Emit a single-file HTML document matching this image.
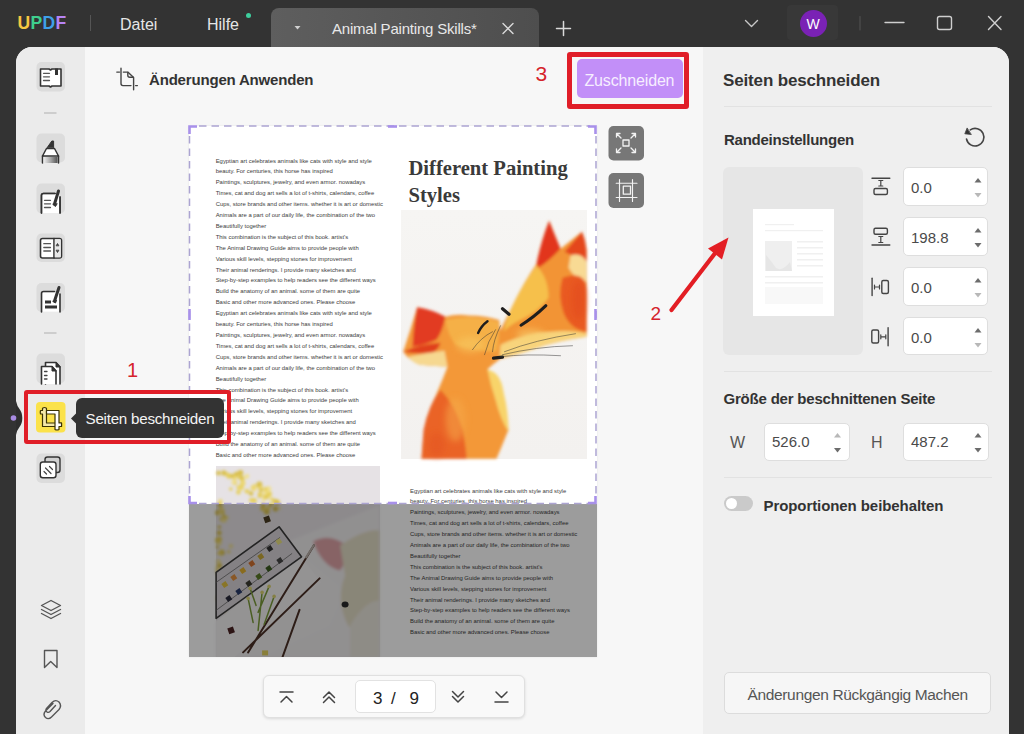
<!DOCTYPE html>
<html><head><meta charset="utf-8">
<style>
*{margin:0;padding:0;box-sizing:border-box}
html,body{width:1024px;height:734px;overflow:hidden;background:#333;font-family:"Liberation Sans",sans-serif;position:relative}
.a{position:absolute}
.t{position:absolute;white-space:nowrap;line-height:1}
svg{position:absolute;left:0;top:0;overflow:visible}
.inp{position:absolute;background:#fff;border:1px solid #dedede;border-radius:5px}
.num{position:absolute;font-size:15px;color:#4a4a4a;line-height:1;white-space:nowrap;margin-top:-1.5px}
.doc{position:absolute;font-size:5.9px;line-height:10.9px;color:#3c3c3c;white-space:nowrap}
</style></head><body>
<!-- ===== title bar ===== -->
<div class="t" style="left:17.5px;top:14.5px;font-size:17.5px;font-weight:bold;letter-spacing:0.3px"><span style="color:#f5c842">U</span><span style="color:#3ecf8e">P</span><span style="color:#3fa0e8">D</span><span style="color:#b784f5">F</span></div>
<div class="a" style="left:90px;top:15px;width:1px;height:16px;background:#555"></div>
<div class="t" style="left:120px;top:17px;font-size:16px;color:#e6e6e6">Datei</div>
<div class="t" style="left:207px;top:17px;font-size:16px;color:#e6e6e6">Hilfe</div>
<div class="a" style="left:246px;top:13px;width:5px;height:5px;border-radius:50%;background:#3ecf9e"></div>
<div class="a" style="left:271px;top:8px;width:268px;height:39px;border-radius:8px 8px 0 0;background:linear-gradient(90deg,#5e5e5e,#4e4e4e)"></div>
<div class="t" style="left:332px;top:21px;font-size:15px;letter-spacing:-0.2px;color:#e8e8e8">Animal Painting Skills*</div>
<div class="a" style="left:787px;top:5px;width:51px;height:35px;border-radius:4px;background:#383838"></div>
<div class="a" style="left:799.5px;top:9.5px;width:27px;height:27px;border-radius:50%;background:#7a22b5"></div>
<div class="t" style="left:799.5px;top:16.5px;width:27px;text-align:center;font-size:14px;color:#fff">W</div>

<!-- ===== main window ===== -->
<div class="a" style="left:16px;top:47px;width:993px;height:700px;border-radius:16px 16px 0 0;background:#f7f7f7;overflow:hidden">
  <div class="a" style="left:0;top:0;width:69px;height:700px;background:#ebebeb"></div>
  <div class="a" style="left:687px;top:0;width:306px;height:700px;background:#efefef"></div>
</div>

<!-- content header -->
<div class="t" style="left:149px;top:72px;font-size:15px;letter-spacing:-0.18px;font-weight:bold;color:#333">Änderungen Anwenden</div>

<!-- right panel -->
<div class="t" style="left:723px;top:72px;font-size:17px;letter-spacing:-0.15px;font-weight:bold;color:#333">Seiten beschneiden</div>
<div class="a" style="left:724px;top:106px;width:268px;height:1px;background:#e2e2e2"></div>
<div class="t" style="left:724px;top:131.5px;font-size:15px;letter-spacing:-0.25px;font-weight:bold;color:#333">Randeinstellungen</div>
<div class="a" style="left:723px;top:167px;width:140px;height:188px;border-radius:6px;background:#e6e6e6"></div>
<div class="a" style="left:752.5px;top:208.5px;width:81px;height:107.5px;background:#fff"></div>

<div class="inp" style="left:903.3px;top:167px;width:85.2px;height:38.5px"></div>
<div class="inp" style="left:903.3px;top:217px;width:85.2px;height:38.5px"></div>
<div class="inp" style="left:903.3px;top:267px;width:85.2px;height:38.5px"></div>
<div class="inp" style="left:903.3px;top:316.7px;width:85.2px;height:38.5px"></div>
<div class="num" style="left:911px;top:181px">0.0</div>
<div class="num" style="left:911px;top:231px">198.8</div>
<div class="num" style="left:911px;top:281px">0.0</div>
<div class="num" style="left:911px;top:331px">0.0</div>

<div class="a" style="left:724px;top:371px;width:268px;height:1px;background:#e2e2e2"></div>
<div class="t" style="left:723.5px;top:391px;font-size:15px;letter-spacing:-0.2px;font-weight:bold;color:#333">Größe der beschnittenen Seite</div>
<div class="t" style="left:730px;top:435px;font-size:16px;color:#555">W</div>
<div class="inp" style="left:763.5px;top:422.5px;width:86px;height:38px"></div>
<div class="num" style="left:772px;top:435px">526.0</div>
<div class="t" style="left:871px;top:435px;font-size:16px;color:#555">H</div>
<div class="inp" style="left:903px;top:422.5px;width:85.5px;height:38px"></div>
<div class="num" style="left:911px;top:435px">487.2</div>
<div class="a" style="left:724px;top:477px;width:268px;height:1px;background:#e2e2e2"></div>
<div class="a" style="left:723.5px;top:496px;width:29px;height:15px;border-radius:8px;background:#cacaca"></div>
<div class="a" style="left:725.5px;top:498px;width:11px;height:11px;border-radius:50%;background:#fff"></div>
<div class="t" style="left:763.5px;top:498px;font-size:15px;letter-spacing:-0.08px;font-weight:bold;color:#333">Proportionen beibehalten</div>
<div class="a" style="left:724px;top:672px;width:267px;height:41.5px;border-radius:5px;background:#f6f6f6;border:1px solid #dcdcdc"></div>
<div class="t" style="left:747.5px;top:686.5px;font-size:15.5px;letter-spacing:-0.35px;color:#555">Änderungen Rückgängig Machen</div>

<!-- zuschneiden -->
<div class="a" style="left:577px;top:58.5px;width:105.5px;height:39.5px;border-radius:5px;background:#c28ff8"></div>
<div class="t" style="left:584.5px;top:73px;font-size:16px;letter-spacing:-0.16px;color:#f6eeff">Zuschneiden</div>
<div class="a" style="left:566.8px;top:52px;width:122.4px;height:56.5px;border:5px solid #e01e28;border-radius:3px"></div>
<div class="t" style="left:535.5px;top:62.5px;font-size:21px;color:#d5232b">3</div>


<!-- ===== document page ===== -->
<div class="a" style="left:188.5px;top:125.5px;width:408.5px;height:531.5px;background:#fff;overflow:hidden;box-shadow:0 0 2px rgba(0,0,0,.08)">
 <div class="doc" style="left:27.2px;top:30px">Egyptian art celebrates animals like cats with style and style<br>beauty. For centuries, this horse has inspired<br>Paintings, sculptures, jewelry, and even armor. nowadays<br>Times, cat and dog art sells a lot of t-shirts, calendars, coffee<br>Cups, store brands and other items. whether it is art or domestic<br>Animals are a part of our daily life, the combination of the two<br>Beautifully together<br>This combination is the subject of this book. artist's<br>The Animal Drawing Guide aims to provide people with<br>Various skill levels, stepping stones for improvement<br>Their animal renderings. I provide many sketches and<br>Step-by-step examples to help readers see the different ways<br>Build the anatomy of an animal. some of them are quite<br>Basic and other more advanced ones. Please choose<br>Egyptian art celebrates animals like cats with style and style<br>beauty. For centuries, this horse has inspired<br>Paintings, sculptures, jewelry, and even armor. nowadays<br>Times, cat and dog art sells a lot of t-shirts, calendars, coffee<br>Cups, store brands and other items. whether it is art or domestic<br>Animals are a part of our daily life, the combination of the two<br>Beautifully together<br>This combination is the subject of this book. artist's<br>The Animal Drawing Guide aims to provide people with<br>Various skill levels, stepping stones for improvement<br>Their animal renderings. I provide many sketches and<br>Step-by-step examples to help readers see the different ways<br>Build the anatomy of an animal. some of them are quite<br>Basic and other more advanced ones. Please choose</div>
 <div class="t" style="left:220px;top:29.5px;font-family:'Liberation Serif',serif;font-weight:bold;font-size:20.6px;line-height:26.6px;color:#3a3a3a">Different Painting<br>Styles</div>
 <svg style="left:212px;top:84.8px" width="186" height="249" viewBox="400.5 210.3 186 249">
  <defs>
   <filter id="bl" x="-20%" y="-20%" width="140%" height="140%"><feGaussianBlur stdDeviation="1.5"/></filter>
   <filter id="bl2" x="-20%" y="-20%" width="140%" height="140%"><feGaussianBlur stdDeviation="3"/></filter>
   <linearGradient id="fbg" x1="0" y1="0" x2="0" y2="1"><stop offset="0" stop-color="#f6f5f3"/><stop offset="1" stop-color="#f3f1ef"/></linearGradient>
  </defs>
  <rect x="400.5" y="210.3" width="186" height="249" fill="url(#fbg)"/>
  <g filter="url(#bl)">
   <!-- big fox head -->
   <path d="M548.6,221 Q553,232 560,249 L581.5,232 Q585,240 586,250 L586,337 Q560,340 534,349 Q515,356 496,360 Q493,345 497,336 Q506,318 515,300 Q525,280 536,264 Q541,240 548.6,221 Z" fill="#f29434"/>
   <path d="M548.6,221 Q553,232 560,249 Q548,262 538,268 L536,264 Q541,240 548.6,221 Z" fill="#e2361c"/>
   <path d="M581.5,232 Q585,240 586,250 L586,262 Q575,258 564,252 Z" fill="#e4461e"/>
   <path d="M570,256 Q580,252 586,262 L586,282 Q575,280 568,268 Z" fill="#f8da94"/>
   <path d="M562,278 Q586,270 586,292 L586,332 Q570,330 563,313 Q557,296 562,278 Z" fill="#e95a20"/>
   <path d="M536,266 Q548,278 548,298 Q538,312 520,320 Q508,326 503,332 Q506,318 515,300 Q525,280 536,266 Z" fill="#f6c04c"/>
   <path d="M500,345 Q525,333 550,332 Q572,330 586,334 L586,337 Q560,340 534,349 Q515,356 498,358 Z" fill="#f8d47c"/>
   <!-- small cat -->
   <path d="M416.7,307.6 Q430,310 444.8,317 Q456,314 468,315.8 Q486,316 498.7,320.4 Q501,340 498.7,360 Q493,364 487,369.6 Q496,380 501,393 Q506,410 508,430 Q502,445 496,459 L421,459 Q422,445 423.8,430.5 Q428,410 435.5,395.4 Q442,380 447,367 Q430,366 419,365 Q408,360 402.7,352 Q410,330 416.7,307.6 Z" fill="#f39838"/>
   <path d="M416.7,307.6 Q432,310 444.8,317 Q442,332 436,340 Q425,345 412,347 Q413,325 416.7,307.6 Z" fill="#e23a20"/>
   <path d="M402.7,352 Q420,344 440,343 Q438,350 432,353 Q418,355 402.7,352 Z" fill="#e0401e"/>
   <path d="M408,357 Q425,353 444,351 L447,367 Q430,366 419,365 Q411,362 408,357 Z" fill="#f6d890"/>
   <path d="M445,320 Q470,314 498,322 Q499,340 496,352 Q475,352 455,345 Q447,335 445,320 Z" fill="#f5b046"/>
   <path d="M423,430 Q428,405 440,390 Q455,405 462,430 Q466,450 466,459 L421,459 Z" fill="#ea6428"/>
   <path d="M487,370 Q500,372 503,392 Q508,412 508,432 Q500,420 495,400 Q490,385 487,370 Z" fill="#f8d46a"/>
  </g>
  <g filter="url(#bl2)" opacity="0.55">
   <ellipse cx="470" cy="345" rx="14" ry="8" fill="#f8c860"/>
   <ellipse cx="455" cy="420" rx="10" ry="22" fill="#f6a848"/>
   <ellipse cx="436" cy="445" rx="8" ry="12" fill="#e45424"/>
   <ellipse cx="578" cy="300" rx="7" ry="20" fill="#e24a1e"/>
   <ellipse cx="530" cy="335" rx="14" ry="6" fill="#f8d070"/>
  </g>
  <g fill="none" stroke="#1e1e1e" stroke-linecap="round">
   <path d="M520.5,325.5 Q533,318 545.4,306" stroke-width="3"/>
   <path d="M477.6,333.3 Q481,326 487,321.6" stroke-width="2.4"/>
   <path d="M502,309 L508.5,314.5" stroke-width="3.2"/>
   <path d="M493,358.5 L502,357.5" stroke-width="3.2"/>
   <path d="M504,352 Q535,340 575,334 M502,355 Q535,347 572,346 M500,357 Q525,354 560,356" stroke-width="0.5" stroke="#333"/>
   <path d="M495,330 Q487,342 484,355 M492,332 Q480,338 472,350 M500,326 Q493,340 492,352" stroke-width="0.5" stroke="#333"/>
  </g>
 </svg>
 <div class="doc" style="left:221.5px;top:360px">Egyptian art celebrates animals like cats with style and style<br>beauty. For centuries, this horse has inspired<br>Paintings, sculptures, jewelry, and even armor. nowadays<br>Times, cat and dog art sells a lot of t-shirts, calendars, coffee<br>Cups, store brands and other items. whether it is art or domestic<br>Animals are a part of our daily life, the combination of the two<br>Beautifully together<br>This combination is the subject of this book. artist's<br>The Animal Drawing Guide aims to provide people with<br>Various skill levels, stepping stones for improvement<br>Their animal renderings. I provide many sketches and<br>Step-by-step examples to help readers see the different ways<br>Build the anatomy of an animal. some of them are quite<br>Basic and other more advanced ones. Please choose</div>
 <svg style="left:27.4px;top:340px" width="164" height="192" viewBox="215.9 465.6 164 192">
  <defs>
   <filter id="bl3" x="-20%" y="-20%" width="140%" height="140%"><feGaussianBlur stdDeviation="1.4"/></filter>
   <filter id="bl4" x="-20%" y="-20%" width="140%" height="140%"><feGaussianBlur stdDeviation="0.6"/></filter>
  </defs>
  <rect x="215.9" y="465.6" width="164" height="192" fill="#e6e2e5"/>
  <g filter="url(#bl3)">
   <path d="M290,540 L379,505 L379,657 L262,657 Z" fill="#eeebec"/>
   <g><circle cx="227.7" cy="474.5" r="2.4" fill="#e6cf5a"/><circle cx="259.1" cy="486.4" r="2.4" fill="#ecd770"/><circle cx="268.4" cy="507.0" r="2.3" fill="#ecd770"/><circle cx="238.5" cy="487.0" r="2.1" fill="#e6cf5a"/><circle cx="266.0" cy="496.5" r="2.4" fill="#d9bf48"/><circle cx="266.6" cy="492.4" r="2.4" fill="#f0e090"/><circle cx="265.3" cy="491.3" r="2.7" fill="#f0e090"/><circle cx="279.0" cy="507.9" r="1.7" fill="#f0e090"/><circle cx="236.2" cy="473.9" r="2.5" fill="#d9bf48"/><circle cx="246.5" cy="476.2" r="2.3" fill="#f0e090"/><circle cx="259.3" cy="484.1" r="2.9" fill="#d9bf48"/><circle cx="276.0" cy="501.5" r="2.8" fill="#e6cf5a"/><circle cx="263.1" cy="505.1" r="2.4" fill="#d9bf48"/><circle cx="218.4" cy="472.7" r="2.3" fill="#d9bf48"/><circle cx="263.6" cy="499.3" r="2.0" fill="#f0e090"/><circle cx="277.0" cy="502.4" r="1.7" fill="#d9bf48"/><circle cx="254.6" cy="485.6" r="1.9" fill="#e6cf5a"/><circle cx="242.6" cy="482.5" r="1.6" fill="#ecd770"/><circle cx="275.3" cy="508.4" r="2.6" fill="#d9bf48"/><circle cx="247.1" cy="475.6" r="2.1" fill="#f0e090"/><circle cx="262.6" cy="508.0" r="2.6" fill="#e6cf5a"/><circle cx="260.7" cy="488.0" r="2.2" fill="#ecd770"/><circle cx="270.6" cy="504.4" r="2.0" fill="#d9bf48"/><circle cx="254.1" cy="500.3" r="2.6" fill="#e6cf5a"/><circle cx="254.4" cy="489.0" r="2.1" fill="#f0e090"/><circle cx="233.4" cy="476.1" r="1.9" fill="#d9bf48"/><circle cx="267.9" cy="509.6" r="1.7" fill="#e6cf5a"/><circle cx="275.2" cy="501.0" r="2.3" fill="#d9bf48"/><circle cx="234.4" cy="482.0" r="2.6" fill="#e6cf5a"/><circle cx="261.2" cy="487.0" r="1.9" fill="#ecd770"/><circle cx="251.0" cy="499.1" r="1.6" fill="#ecd770"/><circle cx="240.3" cy="472.3" r="2.8" fill="#d9bf48"/><circle cx="260.7" cy="489.2" r="2.1" fill="#ecd770"/><circle cx="233.6" cy="481.7" r="2.3" fill="#f0e090"/><circle cx="234.2" cy="477.4" r="2.2" fill="#ecd770"/><circle cx="266.0" cy="510.4" r="2.9" fill="#ecd770"/><circle cx="269.0" cy="493.7" r="2.8" fill="#e6cf5a"/><circle cx="272.0" cy="499.1" r="1.9" fill="#e6cf5a"/><circle cx="268.3" cy="488.6" r="2.9" fill="#f0e090"/><circle cx="260.9" cy="489.7" r="1.8" fill="#d9bf48"/><circle cx="238.5" cy="477.0" r="1.7" fill="#e6cf5a"/><circle cx="238.3" cy="491.9" r="2.3" fill="#e6cf5a"/><circle cx="241.1" cy="487.4" r="2.7" fill="#ecd770"/><circle cx="230.8" cy="488.6" r="1.8" fill="#e6cf5a"/><circle cx="242.7" cy="482.9" r="2.7" fill="#ecd770"/><circle cx="228.9" cy="476.1" r="2.3" fill="#e6cf5a"/><circle cx="269.7" cy="497.7" r="1.7" fill="#f0e090"/><circle cx="277.8" cy="502.0" r="2.3" fill="#d9bf48"/><circle cx="231.9" cy="475.5" r="2.1" fill="#d9bf48"/><circle cx="241.3" cy="485.7" r="1.8" fill="#e6cf5a"/><circle cx="259.5" cy="495.9" r="1.8" fill="#d9bf48"/><circle cx="242.0" cy="478.4" r="2.5" fill="#e6cf5a"/><circle cx="251.0" cy="493.1" r="2.3" fill="#d9bf48"/><circle cx="241.3" cy="476.7" r="1.9" fill="#d9bf48"/><circle cx="264.4" cy="496.2" r="2.2" fill="#e6cf5a"/><circle cx="266.7" cy="511.7" r="2.7" fill="#d9bf48"/><circle cx="265.5" cy="488.8" r="2.1" fill="#e6cf5a"/><circle cx="259.9" cy="493.8" r="2.4" fill="#e6cf5a"/><circle cx="246.8" cy="490.9" r="2.3" fill="#e6cf5a"/><circle cx="251.0" cy="499.9" r="2.1" fill="#e6cf5a"/><circle cx="223.8" cy="472.5" r="2.6" fill="#d9bf48"/><circle cx="253.2" cy="487.4" r="2.7" fill="#ecd770"/><circle cx="220.5" cy="506.7" r="2.6" fill="#ecd770"/><circle cx="223.9" cy="609.8" r="2.3" fill="#f0e090"/><circle cx="217.1" cy="567.8" r="2.0" fill="#f0e090"/><circle cx="223.0" cy="603.3" r="2.2" fill="#e6cf5a"/><circle cx="218.3" cy="541.3" r="2.6" fill="#ecd770"/><circle cx="230.8" cy="545.7" r="2.2" fill="#f0e090"/><circle cx="227.2" cy="517.2" r="1.7" fill="#f0e090"/><circle cx="224.3" cy="582.3" r="2.7" fill="#f0e090"/><circle cx="219.0" cy="564.5" r="2.5" fill="#ecd770"/><circle cx="219.5" cy="564.4" r="1.9" fill="#ecd770"/><circle cx="227.1" cy="593.7" r="2.4" fill="#f0e090"/><circle cx="219.5" cy="565.5" r="2.3" fill="#d9bf48"/><circle cx="218.7" cy="597.8" r="2.5" fill="#ecd770"/><circle cx="221.4" cy="518.9" r="2.0" fill="#d9bf48"/><circle cx="221.1" cy="553.1" r="2.4" fill="#ecd770"/><circle cx="221.7" cy="551.5" r="2.6" fill="#e6cf5a"/><circle cx="219.2" cy="552.9" r="2.0" fill="#e6cf5a"/><circle cx="228.6" cy="551.4" r="1.8" fill="#ecd770"/><circle cx="217.4" cy="571.3" r="1.8" fill="#d9bf48"/><circle cx="219.2" cy="526.6" r="1.7" fill="#d9bf48"/><circle cx="223.5" cy="515.1" r="1.5" fill="#d9bf48"/><circle cx="223.2" cy="518.7" r="1.6" fill="#ecd770"/><circle cx="217.3" cy="546.6" r="1.6" fill="#d9bf48"/><circle cx="219.5" cy="504.0" r="2.1" fill="#d9bf48"/><circle cx="220.3" cy="500.8" r="2.1" fill="#ecd770"/><circle cx="222.5" cy="570.9" r="2.5" fill="#f0e090"/><circle cx="219.9" cy="543.0" r="1.9" fill="#f0e090"/><circle cx="217.8" cy="512.4" r="2.7" fill="#d9bf48"/><circle cx="222.4" cy="510.7" r="2.5" fill="#f0e090"/><circle cx="219.1" cy="532.5" r="2.4" fill="#d9bf48"/><circle cx="222.1" cy="511.8" r="2.2" fill="#e6cf5a"/><circle cx="218.9" cy="573.4" r="2.2" fill="#e6cf5a"/><circle cx="220.4" cy="579.0" r="1.7" fill="#ecd770"/><circle cx="224.0" cy="519.7" r="2.7" fill="#f0e090"/><circle cx="220.0" cy="513.5" r="1.9" fill="#f0e090"/><circle cx="218.4" cy="561.0" r="2.3" fill="#f0e090"/><circle cx="218.9" cy="553.1" r="1.6" fill="#ecd770"/><circle cx="226.2" cy="583.0" r="2.2" fill="#f0e090"/><circle cx="217.6" cy="539.5" r="2.6" fill="#e6cf5a"/><circle cx="222.9" cy="552.7" r="1.9" fill="#d9bf48"/><circle cx="223.2" cy="596.3" r="2.6" fill="#e6cf5a"/><circle cx="219.2" cy="538.8" r="2.6" fill="#e6cf5a"/><circle cx="224.7" cy="516.7" r="2.2" fill="#e6cf5a"/><circle cx="221.9" cy="520.3" r="1.7" fill="#f0e090"/><circle cx="230.3" cy="573.7" r="1.7" fill="#ecd770"/></g>
   <path d="M216,621 L300.9,553.7 L345,590 L330,625 L262,657 L216,657 Z" fill="#efedee"/>
   <path d="M313,541 Q330,532 346,545 Q348,560 340,570 Q322,566 313,541 Z" fill="#dda2a6"/>
   <path d="M340,545 Q365,528 379,530 L379,628 Q360,640 348,625 Q335,600 345,575 Z" fill="#e1dbc4"/>
   <path d="M350,625 Q365,600 379,600 L379,657 L350,657 Z" fill="#e8e5dc"/>
  </g>
  <path d="M216,621 L300.9,556 L321,582 L234,657 L216,657 Z" fill="#f2f0f1"/>
  <path d="M216,572 L279,526.4 L301.4,556.4 L216,618 Z" fill="#d8d3d8" stroke="#3a3a3a" stroke-width="1.6" stroke-linejoin="round"/>
  <path d="M216,582 L280,537 M216,610 L292,553" stroke="#6a6a6a" stroke-width="0.8"/>
  <g filter="url(#bl4)">
   <rect x="222" y="582" width="5" height="5" fill="#e0c040" transform="rotate(-35 224 584)"/>
   <rect x="231" y="575" width="5" height="5" fill="#e09040" transform="rotate(-35 233 577)"/>
   <rect x="240" y="568" width="5" height="5" fill="#e0b030" transform="rotate(-35 242 570)"/>
   <rect x="249" y="561" width="5" height="5" fill="#d07030" transform="rotate(-35 251 563)"/>
   <rect x="258" y="554" width="5" height="5" fill="#c8a838" transform="rotate(-35 260 556)"/>
   <rect x="267" y="546" width="5" height="5" fill="#333" transform="rotate(-35 269 548)"/>
   <rect x="276" y="539" width="5" height="5" fill="#e8e080" transform="rotate(-35 278 541)"/>
   <rect x="226" y="596" width="5" height="5" fill="#2a2a3a" transform="rotate(-35 228 598)"/>
   <rect x="236" y="589" width="5" height="5" fill="#2a3a6a" transform="rotate(-35 238 591)"/>
   <rect x="246" y="581" width="5" height="5" fill="#3a3a30" transform="rotate(-35 248 583)"/>
   <rect x="256" y="574" width="5" height="5" fill="#5a7a28" transform="rotate(-35 258 576)"/>
   <rect x="266" y="566" width="5" height="5" fill="#3a5a20" transform="rotate(-35 268 568)"/>
   <rect x="277" y="558" width="5" height="5" fill="#444" transform="rotate(-35 279 560)"/>
   <rect x="264" y="516" width="6" height="6" fill="#4a3a22" transform="rotate(-20 267 519)"/>
   <rect x="228" y="627" width="6" height="6" fill="#4a2424" transform="rotate(-20 231 630)"/>
   <rect x="262" y="650" width="6" height="5" fill="#e0d060"/>
  </g>
  <path d="M313.7,545 L248,652 M319.5,578 L243,652 M299.4,609.5 L282.3,657" stroke="#4a3026" stroke-width="2" stroke-linecap="round"/>
  <path d="M306,557 L313.7,545" stroke="#b8b0a8" stroke-width="2" stroke-linecap="round"/>
  <g stroke="#7a9a3a" stroke-width="1.5" stroke-linecap="round"><path d="M258,630 L262,592 M253,622 L248,598 M264,624 L274,596 M258,612 L269,586 M256,605 L250,588"/></g>
  <g fill="#d8d070"><circle cx="262" cy="592" r="1.8"/><circle cx="248" cy="598" r="1.8"/><circle cx="274" cy="596" r="1.8"/><circle cx="269" cy="586" r="1.8"/><circle cx="250" cy="588" r="1.8"/></g>
  <ellipse cx="345" cy="604" rx="3.5" ry="3" fill="#2a2a2a"/>
 </svg>
 <div class="a" style="left:0;top:378.5px;width:408.5px;height:153px;background:rgba(0,0,0,.39)"></div>
</div>
<!-- crop marquee -->
<svg width="1024" height="734" style="pointer-events:none">
 <g fill="none" stroke="#aca4d2" stroke-width="1.5" stroke-dasharray="7.5 5">
  <path d="M199,126 H590"/>
  <path d="M199,503.5 H590"/>
  <path d="M189.5,136 V498"/>
  <path d="M596,136 V498"/>
 </g>
 <g fill="none" stroke="#a890ea" stroke-width="2.6">
  <path d="M189.5,134 V126.5 H197"/>
  <path d="M588,126.5 H595.5 V134"/>
  <path d="M189.5,496 V503 H197"/>
  <path d="M588,503 H595.5 V496"/>
  <path d="M388,126.5 H397"/>
  <path d="M388,503 H397"/>
  <path d="M189.5,309 V320"/>
  <path d="M595.5,309 V320"/>
 </g>
</svg>

<!-- page nav -->
<div class="a" style="left:263px;top:674.5px;width:261.5px;height:43px;border-radius:6px;background:#f9f9f9;border:1px solid #e0e0e0;box-shadow:0 1px 3px rgba(0,0,0,.12)"></div>
<div class="a" style="left:355px;top:679.5px;width:80.5px;height:33.5px;border-radius:5px;background:#fff;border:1px solid #e2e2e2"></div>
<div class="t" style="left:373px;top:690px;font-size:17px;color:#222">3</div>
<div class="t" style="left:391px;top:690px;font-size:17px;color:#222">/</div>
<div class="t" style="left:409.5px;top:690px;font-size:17px;color:#222">9</div>

<!-- tooltip -->
<div class="a" style="left:76px;top:398px;width:148px;height:39.5px;border-radius:6px;background:#333"></div>
<div class="t" style="left:85.5px;top:411px;font-size:15.2px;letter-spacing:-0.25px;color:#f4f4f4">Seiten beschneiden</div>
<div class="a" style="left:24.3px;top:389.6px;width:206.6px;height:54px;border:4.6px solid #e01e28;border-radius:3px"></div>
<div class="t" style="left:127px;top:359.5px;font-size:20px;color:#d5232b">1</div>
<div class="t" style="left:650.5px;top:303.5px;font-size:19px;color:#d5232b">2</div>

<svg width="1024" height="734" viewBox="0 0 1024 734" style="pointer-events:none">
<g fill="none" stroke-linecap="round" stroke-linejoin="round">
 <!-- title bar icons -->
 <path d="M294.5,26 L300.5,26 L297.5,29.5 Z" fill="#d0d0d0" stroke="none"/>
 <path d="M503,23.5 L513,33.5 M513,23.5 L503,33.5" stroke="#dadada" stroke-width="1.4"/>
 <path d="M556.5,28.5 H570.5 M563.5,21.5 V35.5" stroke="#dadada" stroke-width="1.5"/>
 <path d="M745.5,20.5 L751.5,26.5 L757.5,20.5" stroke="#c8c8c8" stroke-width="1.4"/>
 <path d="M860,16.5 V30" stroke="#555" stroke-width="1"/>
 <path d="M885,22.5 H904" stroke="#cfcfcf" stroke-width="1.4"/>
 <rect x="937.5" y="16.5" width="14" height="13" rx="2" stroke="#cfcfcf" stroke-width="1.4"/>
 <path d="M988.5,16.5 L1001,29.5 M1001,16.5 L988.5,29.5" stroke="#cfcfcf" stroke-width="1.4"/>
</g>
<!-- sidebar icon backgrounds -->
<g fill="#dcdcdc">
 <rect x="36.5" y="62" width="28.5" height="29.5" rx="5"/>
 <rect x="36.5" y="133.5" width="28.5" height="29" rx="5"/>
 <rect x="36.5" y="183.5" width="28.5" height="30" rx="5"/>
 <rect x="36.5" y="233.5" width="28.5" height="28.5" rx="5"/>
 <rect x="36.5" y="283" width="28.5" height="29" rx="5"/>
 <rect x="36.5" y="353.5" width="28.5" height="30" rx="5"/>
 <rect x="36.5" y="453.5" width="28.5" height="29.5" rx="5"/>
</g>
<rect x="36" y="402" width="29.5" height="30.5" rx="4" fill="#fbe24a"/>
<path d="M44,113 H56.5" stroke="#bdbdbd" stroke-width="1.3"/>
<path d="M44,333 H56.5" stroke="#bdbdbd" stroke-width="1.3"/>
<g stroke="#333" stroke-width="1.6" stroke-linejoin="round" stroke-linecap="round">
 <!-- book -->
 <path d="M40.5,69 H49 L50.5,70 L52,69 H61 V86 H52 L50.5,87 L49,86 H40.5 Z" fill="#fff"/>
 <path d="M43.5,73.3 H49.5 M43.5,76.8 H49.5 M43.5,80.5 H49.5" stroke="#555" stroke-width="1.3"/>
 <rect x="55" y="68.5" width="3" height="6.5" fill="#333" stroke="none"/>
 <!-- marker -->
 <path d="M47.3,147.5 L51.8,141 L53.6,141 L53.6,147.5 Z" fill="#333" stroke-width="1"/>
 <path d="M46.5,148.5 H54.5 L58.5,156 H42.5 Z" fill="#fff" stroke-width="1.5"/>
 <path d="M42.5,156 V163 M58.5,156 V163" stroke-width="1.5"/>
 <defs><linearGradient id="mk" x1="0" x2="1"><stop offset="0" stop-color="#f0f0f0"/><stop offset="0.5" stop-color="#a8a8a8"/><stop offset="1" stop-color="#555"/></linearGradient></defs><rect x="43.5" y="157" width="14" height="6" fill="url(#mk)" stroke="none"/>
 <!-- doc + pen -->
 <path d="M41.5,213 V195.5 Q41.5,193.5 43.5,193.5 H55 M60,197 V213" fill="none"/>
 <rect x="42.3" y="194.3" width="17" height="19" fill="#fff" stroke="none"/>
 <path d="M41.5,213 V195.5 Q41.5,193.5 43.5,193.5 H55 M60,197 V213" fill="none"/>
 <path d="M44.5,200.3 H50.5 M44.5,203.8 H50.5 M44.5,207.5 H50.5" stroke="#555" stroke-width="1.3"/>
 <path d="M58.5,191 L54.5,204" stroke-width="3"/>
 <path d="M53,204.5 L55.5,206.5 L57,204 Z" fill="#333" stroke-width="1"/>
 <!-- form doc -->
 <rect x="40.5" y="238.5" width="21" height="19.5" rx="2" fill="#fff"/>
 <path d="M54,238.5 V258" />
 <rect x="54.8" y="239.3" width="6" height="18" fill="#e8e8e8" stroke="none"/>
 <path d="M43.8,243.7 H50.5 M43.8,247.5 H50.5 M43.8,251 H50.5" stroke="#555" stroke-width="1.3"/>
 <path d="M56.3,245.5 L57.5,243.5 L58.7,245.5 Z M56.3,250.5 L57.5,252.5 L58.7,250.5 Z" fill="#444" stroke-width="0.8"/>
 <!-- redact doc -->
 <rect x="42.3" y="292.3" width="17" height="19.5" fill="#fff" stroke="none"/>
 <path d="M41.5,312 V293.5 Q41.5,291.5 43.5,291.5 H54.5 M60,294 V312" fill="none"/>
 <path d="M59,287.5 L54.5,301" stroke-width="3"/>
 <path d="M53,301.5 L55.5,303 L56.5,300.5 Z" fill="#333" stroke-width="1"/>
 <rect x="45" y="300.5" width="6" height="3" fill="#333" stroke="none"/>
 <rect x="45" y="305.5" width="12" height="3" fill="#333" stroke="none"/>
 <!-- pages -->
 <path d="M45.5,384 V362.5 H56 L60,367 V384" fill="#fff"/>
 <path d="M56,362.5 V367 H60 Z" fill="#333" stroke-width="1"/>
 <path d="M41.5,384 V366.5 H52 L56,371 V384" fill="#fff"/>
 <path d="M52,366.5 V371 H56 Z" fill="#333" stroke-width="1"/>
 <path d="M44.5,371.5 H47 M44.5,375.5 H47 M44.5,379 H47" stroke="#444" stroke-width="1.3"/>
 <!-- overlap squares -->
 <rect x="45" y="457" width="15" height="15.5" rx="2.5" fill="#d0d0d0" stroke-width="1.4"/>
 <rect x="40.3" y="462" width="15.7" height="15.7" rx="2.5" fill="#fff" stroke-width="1.4"/>
 <path d="M45.5,468 L51,473.5 M49.5,466.5 L52.5,469.5 M44,471.5 L46.5,474" stroke="#444" stroke-width="1.2"/>
</g>
<!-- yellow crop -->
<g stroke="#3a3204" stroke-width="1.2" stroke-linejoin="round">
 <path d="M42.5,408.5 Q42.5,407.5 44.5,407.5 Q46.5,407.5 46.5,408.5 V423 H61.5 V426.5 H42.5 V414 H40.5 Q40,412.3 40.5,410.5 H42.5 Z" fill="#f3e7a8"/>
 <path d="M46.5,410.5 H59 V423 H61.5 V426.5 H59 V429.5 Q57,430.5 55,429.5 V414 H46.5 Z" fill="#fff"/>
</g>
<!-- bottom sidebar icons -->
<g fill="none" stroke="#555" stroke-width="1.4" stroke-linejoin="round" stroke-linecap="round">
 <path d="M41.5,605.5 L51,600.5 L60.5,605.5 L51,610.5 Z"/>
 <path d="M41.5,609.5 L51,614.5 L60.5,609.5 M41.5,613.5 L51,618.5 L60.5,613.5"/>
 <path d="M44.5,650.5 H57 V667.5 L50.7,661.5 L44.5,667.5 Z"/>
 <path d="M53,703.5 L45.5,711 Q42.5,714.5 45.5,717.5 Q48.5,720 51.5,717 L59,709.5 Q62,705.5 59,702 Q55.5,699 52,702.5 L46.5,708.5 Q45,710.5 47,712 Q48.5,713 50,711.5 L55.5,705.5"/>
</g>
<!-- left edge indicator -->
<path d="M16,401 Q17,406 19.5,409 Q22.3,412.5 22.3,418 Q22.3,423.5 19.5,427 Q17,430 16,435 Z" fill="#2e2e2e"/>
<circle cx="13.5" cy="418" r="2.8" fill="#a88be2"/>
<!-- tooltip arrow -->
<path d="M76.5,413 L71,418.5 L76.5,424 Z" fill="#333"/>
<!-- header crop icon -->
<g fill="none" stroke="#444" stroke-width="1.4" stroke-linejoin="round" stroke-linecap="round">
 <path d="M121,68.2 V83.6 Q121,85.6 123,85.6 H131"/>
 <path d="M116.8,72.1 H119.5 M135.6,85.6 H137.4"/>
 <path d="M123.3,72.1 H127.8 L133.6,77.6 V89.8"/>
 <path d="M127.8,72.4 V75.3 Q127.8,77.2 129.8,77.2 H133.2"/>
</g>
<!-- right panel icons -->
<g fill="none" stroke="#444" stroke-width="1.4" stroke-linejoin="round" stroke-linecap="round">
 <path d="M966.5,139 A8.8,8.8 0 1 0 970.3,129.8" stroke-width="1.6"/>
 <path d="M967,128.3 L964.8,133.8 L971,134.5 Z" fill="#333" stroke-width="0.8"/>
 <!-- top margin -->
 <path d="M872,178.3 H889.8"/>
 <path d="M880.8,180.5 V186 M878.8,180.5 H882.8 M878.8,186 H882.8" stroke-width="1.2"/>
 <rect x="874" y="188.5" width="13.4" height="6" rx="1.5"/>
 <!-- bottom margin -->
 <rect x="874" y="228.3" width="13.4" height="6" rx="1.5"/>
 <path d="M880.8,236.5 V242.5 M878.8,236.5 H882.8 M878.8,242.5 H882.8" stroke-width="1.2"/>
 <path d="M872,245 H889.8"/>
 <!-- left margin -->
 <path d="M872.1,278.3 V295.6"/>
 <path d="M874.5,287 H879.5 M874.5,285 V289 M879.5,285 V289" stroke-width="1.2"/>
 <rect x="881.8" y="280.5" width="6.6" height="13" rx="1.5"/>
 <!-- right margin -->
 <rect x="871.8" y="330" width="6.8" height="13" rx="1.5"/>
 <path d="M880.8,336.8 H885.8 M880.8,334.8 V338.8 M885.8,334.8 V338.8" stroke-width="1.2"/>
 <path d="M888.1,327.8 V345.8"/>
</g>
<g fill="#6c6c6c" stroke="none">
 <path d="M974.5,182.5 L978,178 L981.5,182.5 Z"/><path d="M974.5,193 L978,197.5 L981.5,193 Z" fill="#b8b8b8"/>
 <path d="M974.5,232.5 L978,228 L981.5,232.5 Z"/><path d="M974.5,243 L978,247.5 L981.5,243 Z"/>
 <path d="M974.5,282.5 L978,278 L981.5,282.5 Z"/><path d="M974.5,293 L978,297.5 L981.5,293 Z" fill="#b8b8b8"/>
 <path d="M974.5,332.5 L978,328 L981.5,332.5 Z"/><path d="M974.5,343 L978,347.5 L981.5,343 Z" fill="#b8b8b8"/>
 <path d="M834,437.5 L837.5,433 L841,437.5 Z" fill="#b8b8b8"/><path d="M834,448 L837.5,452.5 L841,448 Z"/>
 <path d="M974.5,437.5 L978,433 L981.5,437.5 Z"/><path d="M974.5,448 L978,452.5 L981.5,448 Z"/>
</g>
<!-- preview mini page lines -->
<g fill="#f0f0f0" stroke="none">
 <rect x="765" y="224" width="29" height="1.2"/>
 <rect x="765" y="230" width="58" height="1.2"/>
 <rect x="765" y="241" width="27" height="30" fill="#efefef"/>
 <path d="M766,271 L766,255 Q772,262 776,268 Q782,272 790,262 L792,271 Z" fill="#e6e6e6"/>
 <rect x="797" y="241" width="26" height="1.5"/>
 <rect x="797" y="247" width="26" height="1.5"/>
 <rect x="797" y="253" width="26" height="1.5"/>
 <rect x="797" y="259" width="26" height="1.5"/>
 <rect x="797" y="265" width="26" height="1.5"/>
 <rect x="765" y="276" width="58" height="1.5"/>
 <rect x="765" y="282" width="58" height="1.5"/>
 <rect x="765" y="287" width="58" height="17" fill="#f8f8f8"/>
</g>
<!-- floating doc buttons -->
<rect x="608.5" y="126" width="35.5" height="34.5" rx="5" fill="#777"/>
<rect x="608.5" y="173" width="35.5" height="35" rx="5" fill="#777"/>
<g fill="none" stroke="#f2f2f2" stroke-width="1.3" stroke-linecap="round" stroke-linejoin="round">
 <rect x="623" y="140" width="6" height="6"/>
 <path d="M621,138 L616.5,133.5 M616.5,137 V133.5 H620 M631,138 L635.5,133.5 M632,133.5 H635.5 V137 M621,148 L616.5,152.5 M616.5,149 V152.5 H620 M631,148 L635.5,152.5 M632,152.5 H635.5 V149"/>
 <rect x="623.3" y="186.2" width="7.2" height="8"/>
 <path d="M619.5,179.5 V201.5 M632.5,179.5 V201.5 M616.2,183.2 H637 M616.2,197.5 H637" stroke-width="1.15"/>
</g>
<!-- nav icons -->
<g fill="none" stroke="#444" stroke-width="1.5" stroke-linecap="round" stroke-linejoin="round">
 <path d="M280,692 H293 M281,702 L286.5,696.5 L292,702"/>
 <path d="M323.5,697.5 L329,692 L334.5,697.5 M323.5,702.5 L329,697 L334.5,702.5"/>
 <path d="M452.5,691.5 L458,697 L463.5,691.5 M452.5,696.5 L458,702 L463.5,696.5"/>
 <path d="M496,692 L501.5,697.5 L507,692 M495,702 H508"/>
</g>
<!-- arrow 2 -->
<path d="M671.5,310 L716,252" stroke="#e31e24" stroke-width="4.2" stroke-linecap="round"/>
<path d="M728.5,237.5 L708,248.5 L722,259.5 Z" fill="#e31e24"/>
</svg>

</body></html>
